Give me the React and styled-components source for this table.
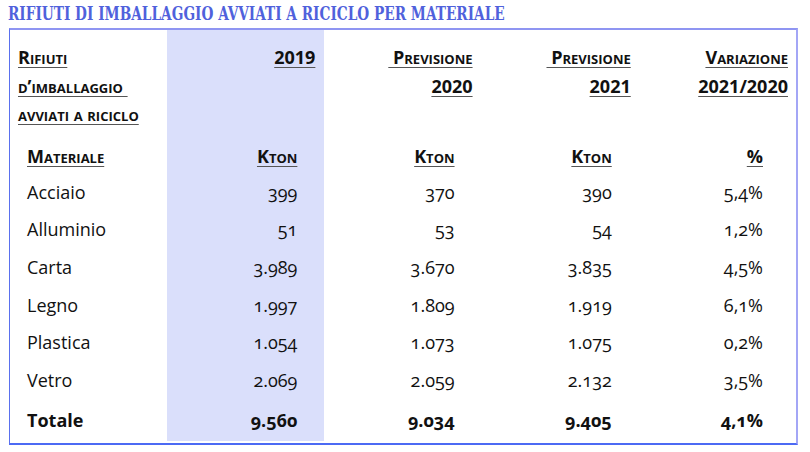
import React from 'react';
import styled, { createGlobalStyle } from 'styled-components';

const GlobalStyle = createGlobalStyle`
  html, body {
    margin: 0;
    padding: 0;
    background: #fff;
  }
`;

const Page = styled.div`
  width: 810px;
  height: 452px;
  padding: 0 0 0 8px;
  box-sizing: border-box;
  font-family: 'Open Sans', 'Noto Sans', sans-serif;
  color: #111;
`;

const Title = styled.h2`
  margin: 0;
  height: 28px;
  padding-top: 1px;
  box-sizing: border-box;
  font-family: 'DejaVu Serif Condensed', 'DejaVu Serif', serif;
  font-weight: bold;
  font-size: 19px;
  line-height: 24px;
  color: #5061dc;
  white-space: nowrap;
  transform: scaleX(0.8);
  transform-origin: left center;
`;

const Box = styled.div`
  margin-left: 1px;
  width: 789px;
  height: 417px;
  box-sizing: border-box;
  border-top: 2px solid #8f95f2;
  border-left: 1px solid #5a70ee;
  border-right: 2px solid #a3a6f6;
  border-bottom: 2px solid #4c6af4;
`;

const Table = styled.table`
  width: 100%;
  border-collapse: collapse;
  table-layout: fixed;
`;

const Cell = styled.td`
  padding: 0 ${p => p.$pr ?? 27}px 0 ${p => p.$pl ?? 0}px;
  text-align: ${p => (p.$left ? 'left' : 'right')};
  background: ${p => (p.$hl ? '#dadffb' : 'transparent')};
  height: ${p => p.$h}px;
  vertical-align: middle;
  font-size: 18px;
  line-height: 22px;
  font-weight: ${p => (p.$bold ? 700 : 400)};
  font-variant-numeric: oldstyle-nums;
  white-space: nowrap;
`;

const HeadCell = styled(Cell)`
  vertical-align: top;
  padding-top: 13px;
  padding-right: ${p => p.$pr ?? 9}px;
  font-size: 18px;
  line-height: 28.5px;
  font-weight: 700;
  font-variant: small-caps;
`;

const UnitCell = styled(Cell)`
  font-size: 18px;
  font-weight: 700;
  font-variant: small-caps;
`;

const Under = styled.span`
  text-decoration: underline;
  text-decoration-color: #555;
  text-underline-offset: 3px;
  text-decoration-thickness: 1px;
  white-space: pre;
`;

const rows = [
  ['Acciaio', '399', '370', '390', '5,4%'],
  ['Alluminio', '51', '53', '54', '1,2%'],
  ['Carta', '3.989', '3.670', '3.835', '4,5%'],
  ['Legno', '1.997', '1.809', '1.919', '6,1%'],
  ['Plastica', '1.054', '1.073', '1.075', '0,2%'],
  ['Vetro', '2.069', '2.059', '2.132', '3,5%'],
];

const Lines = ({ items }) => (
  <>
    {items.map((t, i) => (
      <div key={i}>
        <Under>{t}</Under>
      </div>
    ))}
  </>
);

export default function App() {
  return (
    <Page>
      <GlobalStyle />
      <Title>RIFIUTI DI IMBALLAGGIO AVVIATI A RICICLO PER MATERIALE</Title>
      <Box>
        <Table>
          <tbody>
            <tr>
              <HeadCell $left $pl={8} $h={95}>
                <Lines items={['Rifiuti', 'd’imballaggio ', 'avviati a riciclo']} />
              </HeadCell>
              <HeadCell $hl $h={95}>
                <Lines items={['2019']} />
              </HeadCell>
              <HeadCell $h={95}>
                <Lines items={[' Previsione', '2020']} />
              </HeadCell>
              <HeadCell $pr={8} $h={95}>
                <Lines items={[' Previsione', '2021']} />
              </HeadCell>
              <HeadCell $pr={8} $h={95}>
                <Lines items={['Variazione', '2021/2020']} />
              </HeadCell>
            </tr>
            <tr>
              <UnitCell $left $pl={17} $h={35}>
                <Under>Materiale</Under>
              </UnitCell>
              <UnitCell $hl $h={35}><Under>Kton</Under></UnitCell>
              <UnitCell $h={35}><Under>Kton</Under></UnitCell>
              <UnitCell $h={35}><Under>Kton</Under></UnitCell>
              <UnitCell $pr={33} $h={35}><Under>%</Under></UnitCell>
            </tr>
            {rows.map(r => (
              <tr key={r[0]}>
                <Cell $left $pl={17} $h={37.6}>{r[0]}</Cell>
                <Cell $hl $h={37.6}>{r[1]}</Cell>
                <Cell $h={37.6}>{r[2]}</Cell>
                <Cell $h={37.6}>{r[3]}</Cell>
                <Cell $pr={33} $h={37.6}>{r[4]}</Cell>
              </tr>
            ))}
            <tr>
              <Cell $left $pl={17} $bold $h={42}>Totale</Cell>
              <Cell $hl $bold $h={42}>9.560</Cell>
              <Cell $bold $h={42}>9.034</Cell>
              <Cell $bold $h={42}>9.405</Cell>
              <Cell $pr={33} $bold $h={42}>4,1%</Cell>
            </tr>
          </tbody>
        </Table>
      </Box>
    </Page>
  );
}
